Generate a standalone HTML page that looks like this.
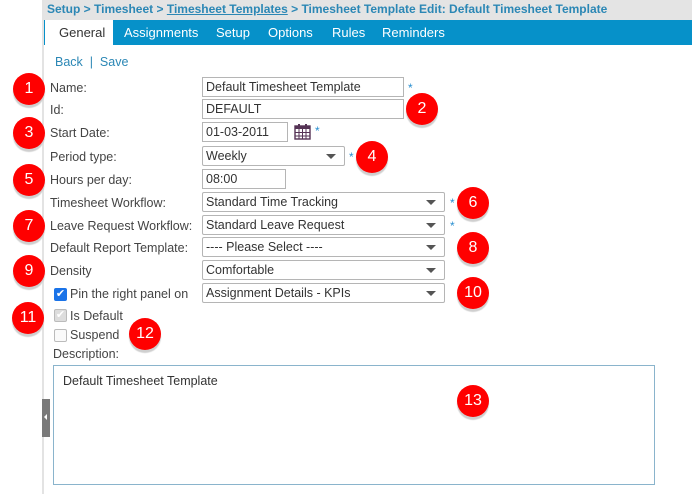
<!DOCTYPE html>
<html><head><style>
*{box-sizing:border-box;margin:0;padding:0}
body{width:692px;height:494px;background:#fff;font-family:"Liberation Sans",sans-serif;font-size:12px;color:#444;position:relative;overflow:hidden}
.a{position:absolute}
.vl{left:42px;top:0;width:2px;height:494px;background:#e3e3e3}
.bc{left:44px;top:0;width:648px;height:20px;background:#e4e4e4;color:#2b87b5;font-size:12px;font-weight:bold;line-height:19px;padding-left:3px;white-space:nowrap}
.tabs{left:44px;top:20px;width:648px;height:25px;background:#0691c9}
.tab{top:20px;height:25px;line-height:25px;color:#fff;font-size:13px}
.lbl{left:50px;font-size:12.5px;color:#444}
.in{border:1px solid #b5b5b5;height:20px;left:202px;font-size:12.5px;line-height:18px;padding-left:3px;color:#333;background:#fff}
.sel::after{content:"";position:absolute;right:8px;top:7px;border-left:5px solid transparent;border-right:5px solid transparent;border-top:5px solid #555}
.sel{border-radius:2px}
.st{color:#2a8fd0;font-size:12px}
.b{width:32px;height:32px;border-radius:50%;background:#f00;color:#fff;font-size:16px;text-align:center;line-height:32px;box-shadow:0 3px 1px #cfcfcf}
.cb{width:13px;height:13px;border:1px solid #bbb;border-radius:2px;background:#fafafa}
</style></head><body>
<div class="a vl"></div>
<div class="a bc">Setup &gt; Timesheet &gt; <u>Timesheet Templates</u> &gt; Timesheet Template Edit: Default Timesheet Template</div>
<div class="a tabs"></div>
<div class="a" style="left:45px;top:20px;width:68px;height:25px;background:#fff"></div>
<div class="a tab" style="left:59px;color:#333">General</div>
<div class="a tab" style="left:124px">Assignments</div>
<div class="a tab" style="left:216px">Setup</div>
<div class="a tab" style="left:268px">Options</div>
<div class="a tab" style="left:332px">Rules</div>
<div class="a tab" style="left:382px">Reminders</div>
<div class="a" style="left:55px;top:55px;color:#2b87b5;font-size:12.5px">Back &nbsp;|&nbsp; Save</div>

<div class="a lbl" style="top:81px">Name:</div>
<div class="a lbl" style="top:103px">Id:</div>
<div class="a lbl" style="top:126px">Start Date:</div>
<div class="a lbl" style="top:150px">Period type:</div>
<div class="a lbl" style="top:173px">Hours per day:</div>
<div class="a lbl" style="top:196px">Timesheet Workflow:</div>
<div class="a lbl" style="top:219px">Leave Request Workflow:</div>
<div class="a lbl" style="top:241px">Default Report Template:</div>
<div class="a lbl" style="top:264px">Density</div>

<div class="a in" style="top:77px;width:202px">Default Timesheet Template</div><div class="a st" style="left:408px;top:81px">*</div>
<div class="a in" style="top:99px;width:202px">DEFAULT</div>
<div class="a in" style="top:122px;width:86px">01-03-2011</div>
<svg class="a" style="left:294px;top:123px" width="17" height="17" viewBox="0 0 17 17"><rect x="1" y="3" width="15" height="13" fill="#fff" stroke="#553355" stroke-width="1.4"/><rect x="1" y="3" width="15" height="3" fill="#553355"/><path d="M1 9.5h15M1 13h15M5 6v10M8.5 6v10M12 6v10" stroke="#553355" stroke-width="1"/><rect x="4" y="1" width="2" height="3" fill="#553355"/><rect x="11" y="1" width="2" height="3" fill="#553355"/></svg>
<div class="a st" style="left:315px;top:124px">*</div>
<div class="a in sel" style="top:146px;width:143px">Weekly</div><div class="a st" style="left:349px;top:150px">*</div>
<div class="a in" style="top:169px;width:84px">08:00</div>
<div class="a in sel" style="top:192px;width:243px">Standard Time Tracking</div><div class="a st" style="left:450px;top:196px">*</div>
<div class="a in sel" style="top:215px;width:243px">Standard Leave Request</div><div class="a st" style="left:450px;top:219px">*</div>
<div class="a in sel" style="top:237px;width:243px">---- Please Select ----</div>
<div class="a in sel" style="top:260px;width:243px">Comfortable</div>
<div class="a in sel" style="top:283px;width:243px">Assignment Details - KPIs</div>

<div class="a" style="left:54px;top:288px;width:13px;height:13px;background:#1a73e8;border-radius:2px;color:#fff;font-size:11px;line-height:13px;text-align:center">✔</div>
<div class="a lbl" style="left:70px;top:287px">Pin the right panel on</div>
<div class="a cb" style="left:54px;top:309px;background:#ddd;color:#fff;font-size:11px;line-height:11px;text-align:center">✔</div>
<div class="a lbl" style="left:70px;top:309px">Is Default</div>
<div class="a cb" style="left:54px;top:329px"></div>
<div class="a lbl" style="left:70px;top:328px">Suspend</div>
<div class="a lbl" style="left:53px;top:347px">Description:</div>
<div class="a" style="left:53px;top:365px;width:602px;height:120px;border:1px solid #8ab4cc;padding:8px 9px;font-size:12.5px;color:#333">Default Timesheet Template</div>
<div class="a" style="left:42px;top:399px;width:8px;height:38px;background:#7a7a7a"></div>
<div class="a" style="left:44px;top:414px;border-top:3px solid transparent;border-bottom:3px solid transparent;border-right:3px solid #fff"></div>

<div class="a b" style="left:13px;top:73px">1</div>
<div class="a b" style="left:406px;top:93px">2</div>
<div class="a b" style="left:13px;top:117px">3</div>
<div class="a b" style="left:356px;top:141px">4</div>
<div class="a b" style="left:13px;top:164px">5</div>
<div class="a b" style="left:457px;top:187px">6</div>
<div class="a b" style="left:13px;top:210px">7</div>
<div class="a b" style="left:457px;top:232px">8</div>
<div class="a b" style="left:13px;top:255px">9</div>
<div class="a b" style="left:457px;top:277px">10</div>
<div class="a b" style="left:12px;top:302px">11</div>
<div class="a b" style="left:129px;top:318px">12</div>
<div class="a b" style="left:457px;top:385px">13</div>
</body></html>
